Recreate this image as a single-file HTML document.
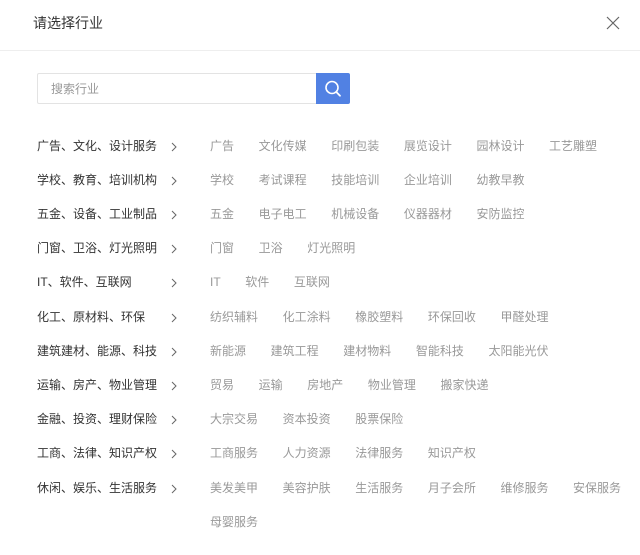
<!DOCTYPE html>
<html><head><meta charset="utf-8"><style>
*{margin:0;padding:0;box-sizing:border-box}
body{width:640px;height:555px;background:#fff;font-family:"Liberation Sans","Noto Sans CJK SC",sans-serif;position:relative;overflow:hidden}
.title{position:absolute;left:33px;top:14px;font-size:14px;color:#333;line-height:18px}
.close{position:absolute;left:606px;top:16px}
.hr{position:absolute;left:0;right:0;top:50px;height:1px;background:#eee}
.search{position:absolute;left:37px;top:73px;width:279px;height:31px;border:1px solid #e3e3e3;border-right:none;border-radius:2px 0 0 2px;font-size:12px;color:#999;padding-left:13px;line-height:31px}
.btn{position:absolute;left:316px;top:73px;width:34px;height:31px;background:#5181e3;border-radius:0 2px 2px 0}
.row{position:absolute;left:37px;width:600px;font-size:12px;line-height:34px}
.cat{position:absolute;left:0;top:0;color:#333}
.arr{position:absolute;left:134px;top:13px}
.items{position:absolute;left:173px;top:0;width:440px;color:#999}
.items span{display:inline-block;margin-right:24.6px;white-space:nowrap}
</style></head><body>
<div class="title">请选择行业</div>
<svg class="close" width="14" height="14" viewBox="0 0 14 14"><path d="M1 1L13 13M13 1L1 13" stroke="#666" stroke-width="1.2"/></svg>
<div class="hr"></div>
<div class="search">搜索行业</div>
<div class="btn"><svg width="34" height="31" viewBox="0 0 34 31"><circle cx="16" cy="14.5" r="6" fill="none" stroke="#fff" stroke-width="1.6"/><path d="M20.3 19L24 22.7" stroke="#fff" stroke-width="1.8" stroke-linecap="round"/></svg></div>
<svg width="0" height="0" style="position:absolute"><defs><symbol id="ch" viewBox="0 0 6 10"><path d="M1 1L5 5L1 9" fill="none" stroke="#666" stroke-width="1"/></symbol></defs></svg>

<div class="row" style="top:129px"><div class="cat">广告、文化、设计服务</div><svg class="arr" width="6" height="10"><use href="#ch"/></svg><div class="items"><span>广告</span><span>文化传媒</span><span>印刷包装</span><span>展览设计</span><span>园林设计</span><span>工艺雕塑</span></div></div>
<div class="row" style="top:163px"><div class="cat">学校、教育、培训机构</div><svg class="arr" width="6" height="10"><use href="#ch"/></svg><div class="items"><span>学校</span><span>考试课程</span><span>技能培训</span><span>企业培训</span><span>幼教早教</span></div></div>
<div class="row" style="top:197px"><div class="cat">五金、设备、工业制品</div><svg class="arr" width="6" height="10"><use href="#ch"/></svg><div class="items"><span>五金</span><span>电子电工</span><span>机械设备</span><span>仪器器材</span><span>安防监控</span></div></div>
<div class="row" style="top:231px"><div class="cat">门窗、卫浴、灯光照明</div><svg class="arr" width="6" height="10"><use href="#ch"/></svg><div class="items"><span>门窗</span><span>卫浴</span><span>灯光照明</span></div></div>
<div class="row" style="top:265px"><div class="cat">IT、软件、互联网</div><svg class="arr" width="6" height="10"><use href="#ch"/></svg><div class="items"><span>IT</span><span>软件</span><span>互联网</span></div></div>
<div class="row" style="top:300px"><div class="cat">化工、原材料、环保</div><svg class="arr" width="6" height="10"><use href="#ch"/></svg><div class="items"><span>纺织辅料</span><span>化工涂料</span><span>橡胶塑料</span><span>环保回收</span><span>甲醛处理</span></div></div>
<div class="row" style="top:334px"><div class="cat">建筑建材、能源、科技</div><svg class="arr" width="6" height="10"><use href="#ch"/></svg><div class="items"><span>新能源</span><span>建筑工程</span><span>建材物料</span><span>智能科技</span><span>太阳能光伏</span></div></div>
<div class="row" style="top:368px"><div class="cat">运输、房产、物业管理</div><svg class="arr" width="6" height="10"><use href="#ch"/></svg><div class="items"><span>贸易</span><span>运输</span><span>房地产</span><span>物业管理</span><span>搬家快递</span></div></div>
<div class="row" style="top:402px"><div class="cat">金融、投资、理财保险</div><svg class="arr" width="6" height="10"><use href="#ch"/></svg><div class="items"><span>大宗交易</span><span>资本投资</span><span>股票保险</span></div></div>
<div class="row" style="top:436px"><div class="cat">工商、法律、知识产权</div><svg class="arr" width="6" height="10"><use href="#ch"/></svg><div class="items"><span>工商服务</span><span>人力资源</span><span>法律服务</span><span>知识产权</span></div></div>
<div class="row" style="top:471px"><div class="cat">休闲、娱乐、生活服务</div><svg class="arr" width="6" height="10"><use href="#ch"/></svg><div class="items"><span>美发美甲</span><span>美容护肤</span><span>生活服务</span><span>月子会所</span><span>维修服务</span><span>安保服务</span><span>母婴服务</span></div></div>
</body></html>
